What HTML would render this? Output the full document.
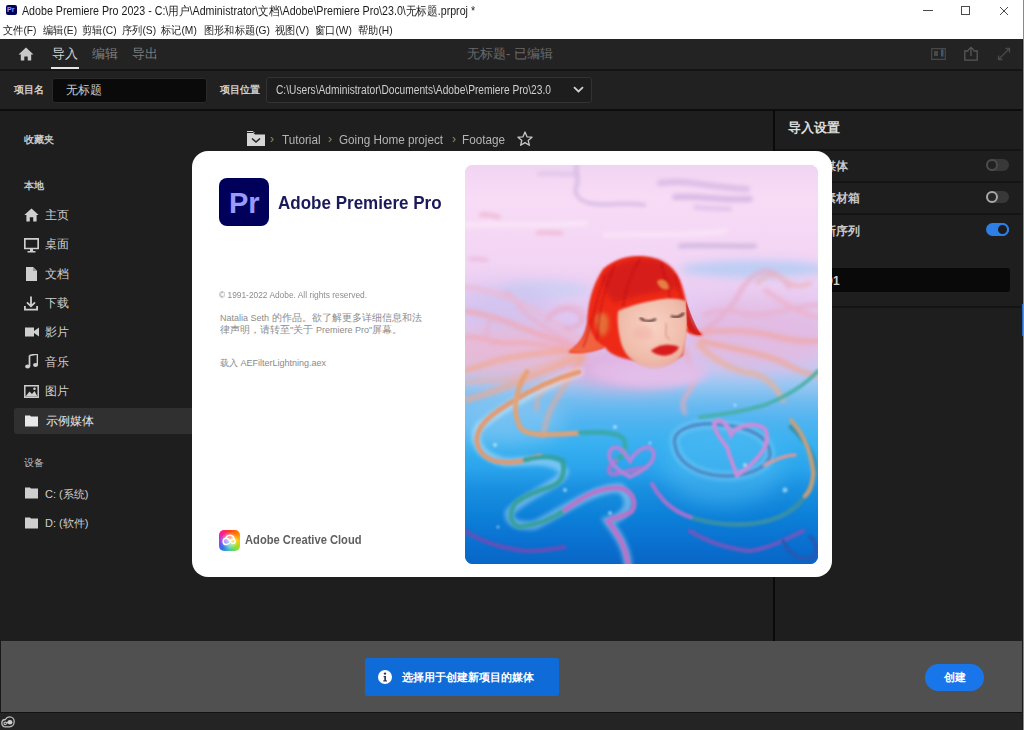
<!DOCTYPE html>
<html><head><meta charset="utf-8">
<style>
*{margin:0;padding:0;box-sizing:border-box}
html,body{width:1024px;height:730px;overflow:hidden;background:#1e1e1e;font-family:"Liberation Sans",sans-serif}
.a{position:absolute;white-space:nowrap}
.sx{transform-origin:0 50%}
#title{left:0;top:0;width:1024px;height:39px;background:#fff}
#nav{left:0;top:39px;width:1022px;height:32px;background:#232323;border-bottom:2px solid #141414}
#proj{left:0;top:71px;width:1022px;height:40px;background:#212121;border-bottom:2px solid #0d0d0d}
#main{left:0;top:111px;width:1021px;height:530px;background:#1e1e1e}
#bar{left:0;top:641px;width:1022px;border-left:1px solid #1a1a1a;height:71px;background:#505050}
#status{left:0;top:712px;width:1022px;height:18px;background:#242424;border-top:1px solid #121212}
#rb{left:1022px;top:39px;width:1px;height:691px;background:#181818}
.menu{top:22px;font-size:11px;color:#222;line-height:16px;transform-origin:0 50%;transform:scaleX(0.93)}
.side{font-size:12px;color:#cfcfcf;line-height:14px}
.sh{font-size:10px;color:#c8c8c8;font-weight:bold;line-height:12px}
</style></head><body>
<!-- title bar -->
<div id="title" class="a">
  <div class="a" style="left:6px;top:5px;width:11px;height:10px;background:#00005b;border-radius:2px"></div>
  <div class="a" style="left:7px;top:6px;font-size:7px;font-weight:bold;color:#9999ff;line-height:8px">Pr</div>
  <div class="a sx" style="left:22px;top:4px;font-size:12px;color:#1a1a1a;line-height:14px;transform:scaleX(0.888)">Adobe Premiere Pro 2023 - C:\用户\Administrator\文档\Adobe\Premiere Pro\23.0\无标题.prproj *</div>
  <div class="a menu" style="left:3px">文件(F)</div>
  <div class="a menu" style="left:43px">编辑(E)</div>
  <div class="a menu" style="left:82px">剪辑(C)</div>
  <div class="a menu" style="left:122px">序列(S)</div>
  <div class="a menu" style="left:161px">标记(M)</div>
  <div class="a menu" style="left:204px">图形和标题(G)</div>
  <div class="a menu" style="left:275px">视图(V)</div>
  <div class="a menu" style="left:315px">窗口(W)</div>
  <div class="a menu" style="left:358px">帮助(H)</div>
  <div class="a" style="left:923px;top:10px;width:10px;height:1px;background:#4a4a4a"></div>
  <div class="a" style="left:961px;top:6px;width:9px;height:9px;border:1px solid #4a4a4a"></div>
  <svg class="a" style="left:999px;top:6px" width="10" height="10"><path d="M1 1L9 9M9 1L1 9" stroke="#4a4a4a" stroke-width="1"/></svg>
</div>
<!-- nav bar -->
<div id="nav" class="a"></div>
<div class="a" style="left:0;top:0">
  <svg class="a" style="left:18px;top:47px" width="16" height="14" viewBox="0 0 16 14"><path d="M8 0.5L0.5 7.5H2.8V13.5H6.3V9.5H9.7V13.5H13.2V7.5H15.5Z" fill="#c9c9c9"/></svg>
  <div class="a" style="left:52px;top:46px;font-size:13px;line-height:16px;color:#d2d2d2">导入</div>
  <div class="a" style="left:51px;top:67px;width:28px;height:2px;background:#e6e6e6"></div>
  <div class="a" style="left:92px;top:46px;font-size:13px;line-height:16px;color:#7d7d7d">编辑</div>
  <div class="a" style="left:132px;top:46px;font-size:13px;line-height:16px;color:#7d7d7d">导出</div>
  <div class="a" style="left:467px;top:46px;font-size:13px;line-height:16px;color:#6a6a6a">无标题- 已编辑</div>
</div>
<div id="proj" class="a"></div>
<div id="main" class="a"></div>
<div class="a" style="left:0;top:0">
  <div class="a" style="left:14px;top:83px;font-size:10px;line-height:13px;color:#cfcfcf;font-weight:bold">项目名</div>
  <div class="a" style="left:52px;top:78px;width:155px;height:25px;background:#0a0a0a;border:1px solid #2a2a2a;border-radius:3px"></div>
  <div class="a" style="left:66px;top:83px;font-size:12px;line-height:14px;color:#cfcfcf">无标题</div>
  <div class="a" style="left:220px;top:83px;font-size:10px;line-height:13px;color:#cfcfcf;font-weight:bold">项目位置</div>
  <div class="a" style="left:266px;top:77px;width:326px;height:26px;background:#1d1d1d;border:1px solid #333;border-radius:3px"></div>
  <div class="a sx" style="left:276px;top:83px;font-size:12px;line-height:14px;color:#cfcfcf;transform:scaleX(0.85)">C:\Users\Administrator\Documents\Adobe\Premiere Pro\23.0</div>
  <svg class="a" style="left:573px;top:86px" width="11" height="7" viewBox="0 0 11 7"><path d="M1 1.2L5.5 5.5L10 1.2" stroke="#d0d0d0" stroke-width="1.8" fill="none"/></svg>
</div>
<!-- sidebar -->
<div class="a" style="left:0;top:0">
  <div class="a sh" style="left:24px;top:134px">收藏夹</div>
  <div class="a sh" style="left:24px;top:180px">本地</div>
  <div class="a" style="left:14px;top:408px;width:190px;height:26px;background:#303030;border-radius:3px"></div>
  <svg class="a" style="left:24px;top:208px" width="15" height="14" viewBox="0 0 15 14"><path d="M7.5 0.5L0.3 7H2.4V13.5H5.8V9.2H9.2V13.5H12.6V7H14.7Z" fill="#cfcfcf"/></svg>
  <div class="a side" style="left:45px;top:208px">主页</div>
  <svg class="a" style="left:24px;top:238px" width="15" height="15" viewBox="0 0 15 15"><path d="M0.8 0.8H14.2V10.5H0.8Z" stroke="#cfcfcf" stroke-width="1.7" fill="none"/><path d="M6 10.5H9V13H11.5V14.5H3.5V13H6Z" fill="#cfcfcf"/></svg>
  <div class="a side" style="left:45px;top:237px">桌面</div>
  <svg class="a" style="left:26px;top:267px" width="11" height="14" viewBox="0 0 11 14"><path d="M0 0H7L11 4V14H0Z" fill="#cfcfcf"/><path d="M7 0V4H11" fill="#9a9a9a"/></svg>
  <div class="a side" style="left:45px;top:267px">文档</div>
  <svg class="a" style="left:24px;top:296px" width="14" height="15" viewBox="0 0 14 15"><path d="M7 0.5V10M3 6.3L7 10.3L11 6.3" stroke="#cfcfcf" stroke-width="1.8" fill="none"/><path d="M0.9 10V13.6H13.1V10" stroke="#cfcfcf" stroke-width="1.8" fill="none"/></svg>
  <div class="a side" style="left:45px;top:296px">下载</div>
  <svg class="a" style="left:25px;top:327px" width="14" height="10" viewBox="0 0 14 10"><path d="M0 0.5H9V9.5H0Z" fill="#cfcfcf"/><path d="M9 4L14 0.5V9.5L9 6Z" fill="#cfcfcf"/></svg>
  <div class="a side" style="left:45px;top:325px">影片</div>
  <svg class="a" style="left:25px;top:354px" width="13" height="15" viewBox="0 0 13 15"><path d="M4.5 1.5L12.5 0V11" stroke="#cfcfcf" stroke-width="1.7" fill="none"/><path d="M4.5 1.5V12.5" stroke="#cfcfcf" stroke-width="1.7"/><ellipse cx="2.6" cy="12.5" rx="2.5" ry="2.1" fill="#cfcfcf"/><ellipse cx="10.5" cy="11" rx="2.5" ry="2.1" fill="#cfcfcf"/></svg>
  <div class="a side" style="left:45px;top:355px">音乐</div>
  <svg class="a" style="left:24px;top:385px" width="15" height="13" viewBox="0 0 15 13"><path d="M0.8 0.8H14.2V12.2H0.8Z" stroke="#cfcfcf" stroke-width="1.5" fill="none"/><path d="M1.5 11.5L5.5 6.5L8 9L10.5 6L13.5 11.5Z" fill="#cfcfcf"/><circle cx="10.5" cy="3.8" r="1.3" fill="#cfcfcf"/></svg>
  <div class="a side" style="left:45px;top:384px">图片</div>
  <svg class="a" style="left:25px;top:415px" width="13" height="12" viewBox="0 0 13 12"><path d="M0 0.5H5L6 1.5H13V11.5H0Z" fill="#e8e8e8"/></svg>
  <div class="a side" style="left:46px;top:414px;color:#e6e6e6">示例媒体</div>
  <div class="a sh" style="left:24px;top:457px;font-weight:normal;color:#bdbdbd">设备</div>
  <svg class="a" style="left:25px;top:487px" width="13" height="12" viewBox="0 0 13 12"><path d="M0 0.5H5L6 1.5H13V11.5H0Z" fill="#cfcfcf"/></svg>
  <div class="a side" style="left:45px;top:487px;font-size:11px">C: (系统)</div>
  <svg class="a" style="left:25px;top:517px" width="13" height="12" viewBox="0 0 13 12"><path d="M0 0.5H5L6 1.5H13V11.5H0Z" fill="#cfcfcf"/></svg>
  <div class="a side" style="left:45px;top:516px;font-size:11px">D: (软件)</div>
</div>
<!-- breadcrumb -->
<div class="a" style="left:0;top:0">
  <svg class="a" style="left:247px;top:131px" width="18" height="15" viewBox="0 0 18 15"><path d="M0 2H6.5L8 3.5H18V15H0Z" fill="#d6d6d6"/><path d="M0 0.5H6L7.5 2" stroke="#d6d6d6" stroke-width="1" fill="none"/><path d="M5 7.5L9 11L13 7.5" stroke="#222" stroke-width="1.6" fill="none"/></svg>
  <div class="a" style="left:270px;top:132px;font-size:12px;line-height:14px;color:#8a8a8a">›</div>
  <div class="a sx" style="left:282px;top:132px;font-size:13px;line-height:15px;color:#b4b4b4;transform:scaleX(0.9)">Tutorial</div>
  <div class="a" style="left:328px;top:132px;font-size:12px;line-height:14px;color:#8a8a8a">›</div>
  <div class="a sx" style="left:339px;top:132px;font-size:13px;line-height:15px;color:#b4b4b4;transform:scaleX(0.9)">Going Home project</div>
  <div class="a" style="left:452px;top:132px;font-size:12px;line-height:14px;color:#8a8a8a">›</div>
  <div class="a sx" style="left:462px;top:132px;font-size:13px;line-height:15px;color:#b4b4b4;transform:scaleX(0.9)">Footage</div>
  <svg class="a" style="left:517px;top:131px" width="16" height="15" viewBox="0 0 16 15"><path d="M8 1L10 5.8L15 6.2L11.2 9.4L12.4 14.3L8 11.6L3.6 14.3L4.8 9.4L1 6.2L6 5.8Z" stroke="#c8c8c8" stroke-width="1.3" fill="none" stroke-linejoin="round"/></svg>
</div>
<!-- right panel -->
<div class="a" style="left:0;top:0">
  <div class="a" style="left:773px;top:111px;width:2px;height:530px;background:#0a0a0a"></div>
  <div class="a" style="left:788px;top:120px;font-size:13px;line-height:16px;color:#dcdcdc;font-weight:bold">导入设置</div>
  <div class="a" style="left:775px;top:149px;width:246px;height:2px;background:#141414"></div>
  <div class="a" style="left:775px;top:181px;width:246px;height:2px;background:#141414"></div>
  <div class="a" style="left:775px;top:213px;width:246px;height:2px;background:#141414"></div>
  <div class="a" style="left:775px;top:306px;width:246px;height:2px;background:#141414"></div>
  <div class="a" style="left:800px;top:159px;font-size:12px;line-height:14px;color:#c8c8c8;font-weight:bold">复制媒体</div>
  <div class="a" style="left:788px;top:191px;font-size:12px;line-height:14px;color:#c8c8c8;font-weight:bold">创建新素材箱</div>
  <div class="a" style="left:800px;top:224px;font-size:12px;line-height:14px;color:#c8c8c8;font-weight:bold">创建新序列</div>
  <div class="a" style="left:986px;top:159px;width:23px;height:12px;border-radius:6px;background:#383838"></div>
  <div class="a" style="left:986px;top:159px;width:12px;height:12px;border-radius:50%;background:#222;border:2px solid #4c4c4c"></div>
  <div class="a" style="left:986px;top:191px;width:23px;height:12px;border-radius:6px;background:#383838"></div>
  <div class="a" style="left:986px;top:191px;width:12px;height:12px;border-radius:50%;background:#262626;border:2px solid #a8a8a8"></div>
  <div class="a" style="left:986px;top:223px;width:23px;height:13px;border-radius:6.5px;background:#2d7fe6"></div>
  <div class="a" style="left:996px;top:223px;width:13px;height:13px;border-radius:50%;background:#1c1c1c;border:2px solid #2d7fe6"></div>
  <div class="a" style="left:790px;top:268px;width:220px;height:24px;background:#090909;border-radius:3px"></div>
  <div class="a" style="left:799px;top:274px;font-size:12px;line-height:14px;color:#d0d0d0;font-weight:bold">序列 01</div>
</div>
<!-- top-right nav icons -->
<div class="a" style="left:0;top:0">
  <svg class="a" style="left:931px;top:48px" width="15" height="12" viewBox="0 0 15 12"><path d="M0.7 0.7H14.3V11.3H0.7Z" stroke="#484848" stroke-width="1.2" fill="none"/><path d="M3 3H7V8H3Z" fill="#484848"/><path d="M10 1.5H12.5V8.5H10Z" fill="#3a5878"/></svg>
  <svg class="a" style="left:964px;top:46px" width="14" height="15" viewBox="0 0 14 15"><path d="M4.5 5H0.8V14.2H13.2V5H9.5" stroke="#575757" stroke-width="1.3" fill="none"/><path d="M7 10V1.5M4 4.3L7 1.3L10 4.3" stroke="#575757" stroke-width="1.3" fill="none"/></svg>
  <svg class="a" style="left:997px;top:47px" width="14" height="14" viewBox="0 0 14 14"><path d="M1.5 12.5L12.5 1.5M8.5 1.5H12.5V5.5M1.5 8.5V12.5H5.5" stroke="#4a4a4a" stroke-width="1.3" fill="none"/></svg>
</div>
<div id="bar" class="a"></div>
<div id="status" class="a"></div>
<div class="a" style="left:0;top:0">
  <div class="a" style="left:365px;top:658px;width:194px;height:38px;background:#0f6bd8;border-radius:2px"></div>
  <svg class="a" style="left:378px;top:670px" width="14" height="14" viewBox="0 0 14 14"><circle cx="7" cy="7" r="7" fill="#fff"/><circle cx="7" cy="3.6" r="1.2" fill="#2a3a5a"/><path d="M5.6 6H8V10.3H8.9V11.5H5.3V10.3H6.3V7.2H5.6Z" fill="#2a3a5a"/></svg>
  <div class="a" style="left:402px;top:670px;font-size:11.4px;line-height:14px;color:#fff;font-weight:bold">选择用于创建新项目的媒体</div>
  <div class="a" style="left:925px;top:664px;width:59px;height:27px;background:#1876ea;border-radius:14px"></div>
  <div class="a" style="left:944px;top:669px;font-size:11px;line-height:16px;color:#fff;font-weight:bold">创建</div>
  <svg class="a" style="left:1px;top:716px" width="14" height="12" viewBox="0 0 14 12"><path d="M4.3 10.8C2.2 10.8 0.8 9.2 0.8 7.1C0.8 5 2.4 3.5 4.4 3.5C5.3 1.9 6.9 0.8 8.7 0.8C11.3 0.8 13.2 2.9 13.2 5.6C13.2 8.6 11.2 10.8 8.6 10.8Z" stroke="#bdbdbd" stroke-width="1.3" fill="none"/><path d="M6.3 7.8C5.7 6.8 5 6.2 4.3 6.2C3.5 6.2 3 6.8 3 7.4C3 8.1 3.6 8.6 4.3 8.6C5.6 8.6 6.6 5.2 8.6 5.2" stroke="#bdbdbd" stroke-width="1.2" fill="none"/><ellipse cx="9" cy="6.3" rx="2.4" ry="2.3" fill="#cfcfcf"/></svg>
</div>
<!-- modal -->
<div class="a" id="modal" style="left:192px;top:151px;width:640px;height:426px;background:#fff;border-radius:16px">
  <div class="a" style="left:27px;top:27px;width:50px;height:48px;background:#00005b;border-radius:8px"></div>
  <div class="a" style="left:37px;top:35px;font-size:29px;line-height:34px;font-weight:bold;color:#9999ff">Pr</div>
  <div class="a sx" style="left:86px;top:41px;font-size:18.5px;line-height:22px;font-weight:bold;color:#1a1a5a;transform:scaleX(0.92)">Adobe Premiere Pro</div>
  <div class="a sx" style="left:27px;top:139px;font-size:9px;line-height:11px;color:#8c8c8c;transform:scaleX(0.93)">© 1991-2022 Adobe. All rights reserved.</div>
  <div class="a" style="left:28px;top:161px;font-size:9px;line-height:12px;color:#8c8c8c">Natalia Seth <span style="font-size:9.7px">的作品。欲了解更多详细信息和法</span><br><span style="font-size:9.7px">律声明，请转至"关于</span> Premiere Pro"<span style="font-size:9.7px">屏幕。</span></div>
  <div class="a" style="left:28px;top:206px;font-size:9px;line-height:12px;color:#8a8a8a">载入 AEFilterLightning.aex</div>
  <div class="a" style="left:27px;top:379px;width:21px;height:21px;border-radius:5px;background:conic-gradient(#ff3a1a,#ff7a00 45deg,#ffc800 90deg,#90e030 135deg,#40c8b0 180deg,#3070f0 225deg,#a040f0 270deg,#ff1c90 315deg,#ff3a1a)"></div>
  <div class="a" style="left:27px;top:379px;width:21px;height:21px;border-radius:5px;background:radial-gradient(circle at 50% 50%,rgba(255,255,255,0.75) 0,rgba(255,255,255,0.45) 30%,rgba(255,255,255,0) 62%)"></div>
  <svg class="a" style="left:30px;top:382px" width="15" height="15" viewBox="0 0 15 15"><path d="M7.2 10.3C6.2 11.2 5.2 11.6 4.3 11.6C2.5 11.6 1.2 10.2 1.2 8.4C1.2 6.6 2.6 5.2 4.3 5.2C6.4 5.2 7.6 7.6 8.6 8.9C9.5 10 10.4 10.5 11 10.5C12.3 10.5 13.2 9.4 13.2 8.2C13.2 6.9 12.2 5.9 11 5.9C10.2 5.9 9.5 6.3 8.9 7" stroke="#fff" stroke-width="1.5" fill="none" stroke-linecap="round"/><path d="M4 4.4C4.8 3 6.2 2.2 7.8 2.2C10 2.2 11.6 3.6 12 5.4" stroke="#fff" stroke-width="1.5" fill="none" stroke-linecap="round"/></svg>
  <div class="a sx" style="left:53px;top:382px;font-size:12px;line-height:15px;font-weight:bold;color:#606060;transform:scaleX(0.93)">Adobe Creative Cloud</div>
  <div class="a" id="pic" style="left:273px;top:14px;width:353px;height:399px;border-radius:8px;overflow:hidden;background:linear-gradient(180deg,#ecc8ee 0%,#e6cdf0 30%,#c9c6ee 45%,#8cc0ee 60%,#3e9ae4 75%,#1f78d2 90%,#1563c2 100%)"><svg width="353" height="399" viewBox="0 0 353 399" style="position:absolute;left:0;top:0">
<defs>
<linearGradient id="bg" x1="0" y1="0" x2="0" y2="1">
<stop offset="0" stop-color="#f0d4f2"/>
<stop offset="0.08" stop-color="#f8dcf6"/>
<stop offset="0.25" stop-color="#f2d4f4"/>
<stop offset="0.33" stop-color="#e8ccf2"/>
<stop offset="0.4" stop-color="#dcc6f2"/>
<stop offset="0.47" stop-color="#dac4ee"/>
<stop offset="0.51" stop-color="#c4c8f2"/>
<stop offset="0.55" stop-color="#98c6f2"/>
<stop offset="0.59" stop-color="#72bcf0"/>
<stop offset="0.64" stop-color="#50b4f0"/>
<stop offset="0.7" stop-color="#38b0f0"/>
<stop offset="0.76" stop-color="#2aa4ec"/>
<stop offset="0.81" stop-color="#1a90e0"/>
<stop offset="0.88" stop-color="#0c80d8"/>
<stop offset="0.95" stop-color="#0a70d0"/>
<stop offset="1" stop-color="#0866c6"/>
</linearGradient>
<radialGradient id="hair" cx="0.5" cy="0.25" r="0.75">
<stop offset="0" stop-color="#c81818"/>
<stop offset="0.5" stop-color="#e82618"/>
<stop offset="1" stop-color="#f25a3a"/>
</radialGradient>
<radialGradient id="face" cx="0.5" cy="0.4" r="0.65">
<stop offset="0" stop-color="#f8d2c4"/>
<stop offset="0.7" stop-color="#f0bcaa"/>
<stop offset="1" stop-color="#e6a494"/>
</radialGradient>
<filter id="b1" x="-20%" y="-20%" width="140%" height="140%"><feGaussianBlur stdDeviation="1.1"/></filter>
<filter id="b2" x="-30%" y="-30%" width="160%" height="160%"><feGaussianBlur stdDeviation="2"/></filter>
<filter id="b3" x="-50%" y="-50%" width="200%" height="200%"><feGaussianBlur stdDeviation="4"/></filter>
<filter id="b8" x="-50%" y="-50%" width="200%" height="200%"><feGaussianBlur stdDeviation="10"/></filter>
</defs>
<rect width="353" height="399" fill="url(#bg)"/>
<!-- soft colour zones -->
<ellipse cx="290" cy="104" rx="75" ry="9" fill="#b8cdf4" opacity="0.9" filter="url(#b3)"/>
<ellipse cx="80" cy="125" rx="45" ry="10" fill="#c8d0f4" opacity="0.7" filter="url(#b3)"/>
<ellipse cx="50" cy="190" rx="75" ry="30" fill="#f0b4c8" opacity="0.6" filter="url(#b8)"/>
<ellipse cx="40" cy="255" rx="60" ry="25" fill="#a0d0f4" opacity="0.45" filter="url(#b8)"/>
<ellipse cx="290" cy="170" rx="75" ry="35" fill="#e6b4d8" opacity="0.55" filter="url(#b8)"/>
<ellipse cx="160" cy="205" rx="60" ry="18" fill="#e6a8d8" opacity="0.8" filter="url(#b8)"/>
<ellipse cx="40" cy="140" rx="50" ry="20" fill="#c8c0ee" opacity="0.6" filter="url(#b8)"/>
<ellipse cx="258" cy="300" rx="60" ry="40" fill="#50bcf2" opacity="0.5" filter="url(#b8)"/>
<!-- top ripples -->
<g filter="url(#b2)" fill="none" stroke-linecap="round">
<path d="M74 9C85 7 98 10 111 9" stroke="#e0c4ea" stroke-width="4"/>
<path d="M112 0C109 8 116 14 111 22C108 30 116 36 124 38C140 42 160 36 180 40" stroke="#c8acdc" stroke-width="2.5"/>
<path d="M195 18C220 14 240 22 282 24" stroke="#dcbce6" stroke-width="6"/>
<path d="M210 32C235 30 255 36 285 34" stroke="#d8b8e4" stroke-width="6"/>
<path d="M230 42C245 44 255 43 265 44" stroke="#dcc0e8" stroke-width="4"/>
<path d="M215 81C240 79 260 82 290 81" stroke="#ccb4de" stroke-width="4"/>
<path d="M16 50C24 48 30 52 34 52" stroke="#eeb8d2" stroke-width="4"/>
<path d="M73 68C80 66 90 69 96 68" stroke="#eeb8d2" stroke-width="4"/>
<path d="M5 94C12 93 18 95 22 95" stroke="#ecb4d4" stroke-width="3"/>
<path d="M0 60C40 58 70 62 120 58" stroke="#fae6f8" stroke-width="5"/>
<path d="M140 70C180 68 220 72 260 66" stroke="#fae4f8" stroke-width="5"/>
</g>
<!-- upper hair strands -->
<g filter="url(#b2)" fill="none" stroke-linecap="round" stroke-width="5" opacity="0.85">
<path d="M236 168C250 158 262 148 270 136C276 124 286 108 300 106C312 106 318 114 324 122" stroke="#e8acc8" stroke-width="4"/>
<path d="M292 118C300 110 310 108 318 114C326 120 334 124 345 118" stroke="#ecb4bc" stroke-width="4"/>
<path d="M232 168C255 165 280 164 305 170C325 175 340 178 353 176" stroke="#f0a8a8"/>
<path d="M236 176C260 182 290 186 315 196C330 204 342 210 353 210" stroke="#f0a898"/>
<path d="M234 180C250 196 270 206 285 208C300 210 310 220 318 235" stroke="#ecb098"/>
<path d="M220 185C225 200 232 215 225 225C220 232 215 238 220 248" stroke="#f0a8b8" stroke-width="4"/>
<path d="M300 125C315 135 335 150 353 152" stroke="#f0b0c4" stroke-width="4"/>
<path d="M240 150C260 140 275 150 290 150C310 150 330 140 353 140" stroke="#eab0cc" stroke-width="4"/>
<path d="M120 183C95 178 70 168 50 160C30 152 15 148 0 146" stroke="#f0a8b4"/>
<path d="M118 186C90 186 60 188 30 196C18 200 8 204 0 205" stroke="#f2aa94"/>
<path d="M112 180C90 170 75 160 60 148C50 138 48 130 40 128" stroke="#ecb0cc" stroke-width="4"/>
<path d="M116 192C95 200 70 210 45 220C30 226 15 232 0 235" stroke="#f2a890"/>
<path d="M120 192C105 210 95 228 88 240C82 250 80 262 78 270" stroke="#eaa898" stroke-width="4"/>
<path d="M85 148C95 140 110 138 118 146C122 152 118 160 110 160" stroke="#e8b8d8" stroke-width="4"/>
<path d="M118 176C100 166 80 150 60 140C40 130 20 124 0 122" stroke="#eeb8d0" stroke-width="4"/>
<path d="M114 184C95 186 70 176 50 178C30 180 15 170 0 172" stroke="#f4a4a4" stroke-width="3"/>
<path d="M116 188C96 196 75 200 55 210C35 220 18 212 0 218" stroke="#f0b0a0" stroke-width="3"/>
<path d="M82 155C90 145 105 140 115 150C120 160 110 165 100 162" stroke="#e8a8c8" stroke-width="3"/>
<path d="M118 190C110 205 100 215 90 218C75 222 70 235 72 245" stroke="#f0a890" stroke-width="3"/>
<path d="M30 150C20 160 18 172 28 180" stroke="#e8b0c8" stroke-width="3"/>
</g>
<!-- lower tendrils -->
<g filter="url(#b2)" fill="none" stroke-linecap="round" stroke-width="9" opacity="0.35">
<path d="M114 207C90 215 40 240 14 262C8 272 10 290 40 297C60 298 88 290 99 307C98 318 60 330 44 348C44 358 54 362 70 360C100 345 130 322 155 323C172 338 160 352 143 356C148 364 160 376 163 399" stroke="#ffffff"/>
<path d="M210 280C205 264 232 256 258 260C285 262 305 272 305 290C303 305 275 314 248 310C225 306 212 294 210 280Z" stroke="#a0e0ff"/>
</g>
<g filter="url(#b1)" fill="none" stroke-linecap="round" stroke-width="5" opacity="0.9">
<path d="M114 207C95 212 70 222 45 238C25 250 10 262 12 278C15 290 25 297 40 297C52 298 60 295 75 291" stroke="#e6966a"/>
<path d="M60 295C75 291 88 290 98 296C100 307 98 318 85 322C72 326 60 330 50 338C44 348 44 358 54 362C70 360 85 356 100 345" stroke="#34a09a"/>
<path d="M100 345C120 330 135 322 155 323C168 326 172 338 167 346C160 352 148 352 143 356C148 364 160 376 163 399" stroke="#c070c8"/>
<path d="M62 207C52 222 46 245 55 262C62 272 80 270 115 268" stroke="#e8a070"/>
<path d="M115 268C135 266 148 268 155 271C163 276 162 290 150 296" stroke="#3aa8a8"/>
<path d="M150 296C142 302 142 310 150 309C160 307 170 304 179 303" stroke="#a878d0"/>
<path d="M165 296C158 284 150 278 145 286C141 294 150 304 165 312C180 305 192 296 188 286C184 278 172 284 165 296Z" stroke="#c080d8" stroke-width="4"/>
<path d="M210 280C205 264 232 256 258 260C285 262 305 272 305 290C303 305 275 314 248 310C225 306 212 294 210 280Z" stroke="#4a8ac8" stroke-width="4"/>
<path d="M262 282C252 270 245 258 252 256C260 254 264 264 266 270C272 260 290 256 300 264C306 274 300 292 272 310C268 300 264 290 262 282Z" stroke="#d888d8" stroke-width="4"/>
<path d="M225 352C255 362 290 362 314 352C330 345 346 331 350 305C350 290 340 275 326 262" stroke="#3a90a8"/>
<path d="M187 319C195 333 205 345 225 352" stroke="#b070d0" stroke-width="4.5"/>
<path d="M326 255C340 270 346 290 348 307C348 320 344 328 340 331" stroke="#d0a070" stroke-width="4"/>
<path d="M225 366C240 375 255 382 284 386C300 384 314 378 338 366" stroke="#7058c0" stroke-width="4.5"/>
<path d="M0 366C15 375 30 382 60 386C75 386 90 384 99 382" stroke="#6850b8" stroke-width="4.5"/>
<path d="M318 376C325 392 340 398 350 390C353 385 350 375 345 372" stroke="#2a58b0" stroke-width="4"/>
<path d="M353 206C340 220 320 232 300 240C280 246 255 250 235 252" stroke="#48b0a8" stroke-width="4"/>
<path d="M300 300C310 295 320 290 330 290" stroke="#e09898" stroke-width="3.5"/>
</g>
<!-- water around neck -->
<ellipse cx="185" cy="207" rx="58" ry="15" fill="#e4bce8" opacity="0.85" filter="url(#b3)"/>
<!-- head -->
<g>
<path d="M103 187C112 182 120 172 122 158C123 140 126 122 138 104C150 94 162 91 172 91C192 91 207 98 215 115C221 130 222 145 226 156C230 164 236 168 238 170C230 172 224 168 220 166L218 190C210 200 150 200 140 182C132 186 112 190 103 187Z" fill="#ee2a16" filter="url(#b1)"/>
<path d="M140 108C155 95 175 92 195 96C208 102 214 112 212 124C196 126 170 130 150 138C140 130 136 118 140 108Z" fill="#c8141c" opacity="0.6" filter="url(#b2)"/>
<path d="M104 186C114 180 122 170 124 158C126 170 132 178 140 182C130 186 115 190 104 186Z" fill="#f2704a" opacity="0.8" filter="url(#b1)"/>
<path d="M130 152C134 146 140 146 143 152C145 160 143 168 138 172C133 168 130 160 130 152Z" fill="#d8c060" opacity="0.45" filter="url(#b2)"/>
<g stroke="#b80c14" stroke-width="1.6" fill="none" opacity="0.55" filter="url(#b1)"><path d="M150 100C140 120 134 145 132 175"/><path d="M175 94C165 110 160 125 158 142"/><path d="M196 98C200 112 204 125 205 134"/><path d="M210 110C216 130 220 150 228 165"/><path d="M140 110C132 130 128 160 118 182"/></g>
<g fill="#ee2a16" filter="url(#b1)"><path d="M152 142L156 150L160 141Z"/><path d="M170 138L173 146L177 137Z"/><path d="M190 135L193 142L197 134Z"/><path d="M208 134L211 140L214 134Z"/></g>
<path d="M192 116C198 112 204 116 204 124C198 126 193 122 192 116Z" fill="#f0c060" opacity="0.6" filter="url(#b1)"/>
<path d="M153 146C166 140 184 136 198 134C208 133 216 134 221 136C224 152 222 172 218 188C212 198 200 204 188 204C172 202 160 192 156 178C153 166 152 155 153 146Z" fill="url(#face)" filter="url(#b1)"/>
<path d="M221 136C226 150 230 160 236 170C228 170 224 166 222 160Z" fill="#c81818" opacity="0.7"/>
<ellipse cx="178" cy="168" rx="10" ry="7" fill="#f0a8a0" opacity="0.4" filter="url(#b2)"/>
<path d="M175 153C180 157 186 157 191 154" stroke="#3a1414" stroke-width="1.8" fill="none" filter="url(#b1)"/>
<path d="M206 151C210 153 215 152 219 148" stroke="#3a1414" stroke-width="1.8" fill="none" filter="url(#b1)"/>
<path d="M186 186C193 179 205 178 214 182C210 191 196 194 186 186Z" fill="#d81a1e" filter="url(#b1)"/>
<path d="M201 158C202 166 198 172 205 174" stroke="#d89080" stroke-width="1.6" fill="none" opacity="0.7" filter="url(#b1)"/>
</g>
<ellipse cx="192" cy="211" rx="45" ry="8" fill="#e2c0ea" opacity="0.9" filter="url(#b3)"/>
<!-- sparkles -->
<g fill="#fff" opacity="0.5" filter="url(#b1)">
<circle cx="150" cy="262" r="2"/><circle cx="30" cy="280" r="2"/><circle cx="100" cy="325" r="2"/>
<circle cx="320" cy="325" r="2.5"/><circle cx="145" cy="348" r="2"/><circle cx="280" cy="300" r="2"/>
<circle cx="185" cy="278" r="1.5"/><circle cx="270" cy="240" r="1.5"/><circle cx="33" cy="362" r="1.5"/>
</g>
</svg>
</div>
</div>
<div id="rb" class="a"></div>
<div class="a" style="left:1022px;top:304px;width:2px;height:32px;background:#2a6cc0"></div>
<div class="a" style="left:1023px;top:0;width:1px;height:730px;background:#8a8a8a"></div>
</body></html>
